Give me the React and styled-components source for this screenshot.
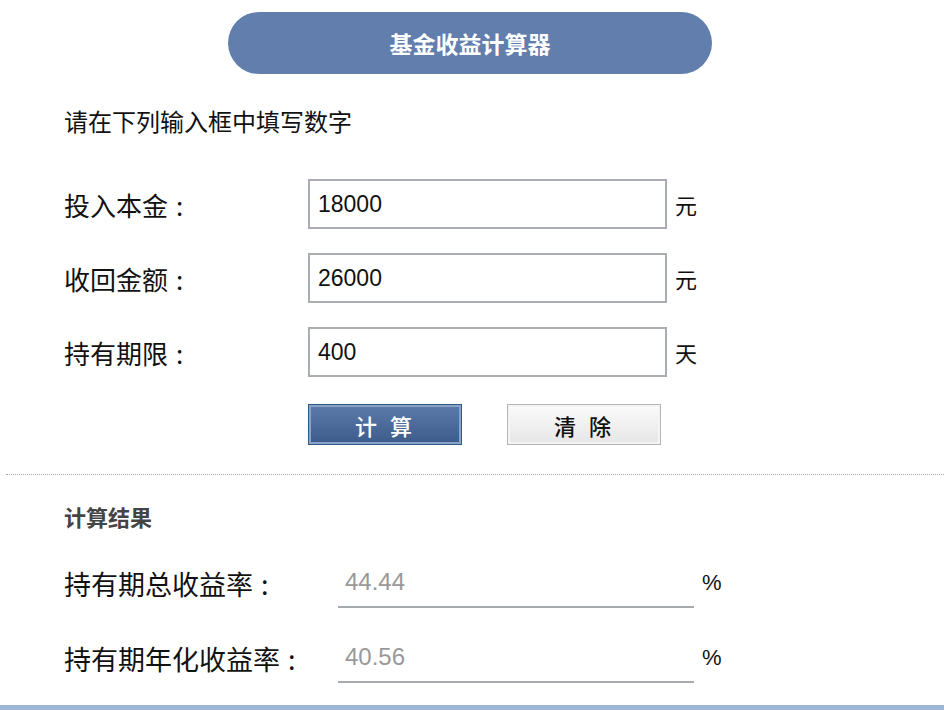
import React from "react";
import styled, { createGlobalStyle } from "styled-components";

const Global = createGlobalStyle`
  html, body { margin: 0; padding: 0; background: #fff; }
  body { font-family: "Liberation Sans", "Noto Sans CJK SC", sans-serif; color: #111; }
`;

const Page = styled.div`
  width: 944px;
  height: 710px;
  overflow: hidden;
  display: flex;
  flex-direction: column;
`;

const Header = styled.div`
  margin: 12px 0 0 228px;
  width: 484px;
  height: 62px;
  border-radius: 31px;
  background: #617ead;
  color: #fff;
  font-family: "Noto Sans CJK SC", sans-serif;
  font-weight: 700;
  font-size: 23px;
  display: flex;
  align-items: center;
  justify-content: center;
`;

const Intro = styled.div`
  margin: 33px 0 0 64px;
  font-family: "Noto Sans CJK SC", sans-serif;
  font-size: 24px;
  line-height: 28px;
  color: #111;
`;

const Form = styled.div`
  margin: 44px 0 0 64px;
  display: flex;
  flex-direction: column;
  gap: 24px;
`;

const Row = styled.div`
  display: flex;
  align-items: center;
  height: 50px;
`;

const Label = styled.div`
  width: ${(p) => p.$w}px;
  font-family: "Noto Sans CJK SC", sans-serif;
  font-size: ${(p) => p.$size || 26}px;
  color: #111;
  flex: none;
  white-space: nowrap;
`;

const Colon = styled.span`
  margin-left: 8px;
`;

const Input = styled.input`
  box-sizing: border-box;
  width: 359px;
  height: 50px;
  border: 2px solid #a9adb1;
  padding: 0 8px;
  font-family: "Liberation Sans", sans-serif;
  font-size: 23px;
  color: #111;
  outline: none;
  background: #fff;
`;

const Unit = styled.span`
  margin-left: 8px;
  font-family: "Noto Sans CJK SC", sans-serif;
  font-size: 22px;
  color: #111;
`;

const Buttons = styled.div`
  margin: 27px 0 0 308px;
  display: flex;
  gap: 45px;
`;

const Btn = styled.button`
  box-sizing: border-box;
  width: 154px;
  height: 41px;
  padding: 0;
  font-family: "Noto Sans CJK SC", sans-serif;
  font-size: 22px;
  font-weight: 500;
  letter-spacing: 13px;
  text-indent: 10px;
  cursor: pointer;
  border: 1px solid ${(p) => (p.$primary ? "#2d5a8a" : "#b5b5b5")};
  box-shadow: inset 0 0 0 2px ${(p) => (p.$primary ? "#8ba3c4" : "#f4f4f4")};
  background: ${(p) =>
    p.$primary
      ? "linear-gradient(#5c7bab, #3c5b8b)"
      : "linear-gradient(#fbfbfb, #e6e6e6)"};
  color: ${(p) => (p.$primary ? "#fff" : "#111")};
`;

const Divider = styled.div`
  margin: 29px 0 0 6px;
  border-top: 1px dotted #a8a8a8;
`;

const SectionTitle = styled.div`
  margin: 28px 0 0 64px;
  font-family: "Noto Sans CJK SC", sans-serif;
  font-weight: 700;
  font-size: 22px;
  line-height: 26px;
  color: #444;
`;

const Results = styled.div`
  margin: 29px 0 0 64px;
  display: flex;
  flex-direction: column;
  gap: 25px;
`;

const Output = styled.div`
  box-sizing: border-box;
  width: 356px;
  height: 50px;
  border-bottom: 2px solid #a6a9ad;
  padding: 0 7px;
  display: flex;
  align-items: center;
  font-family: "Liberation Sans", sans-serif;
  font-size: 24px;
  color: #999;
`;

const Percent = styled.span`
  margin-left: 8px;
  font-family: "Liberation Sans", sans-serif;
  font-size: 22px;
  color: #111;
  align-self: flex-start;
  margin-top: 12px;
`;

const BottomBar = styled.div`
  margin-top: auto;
  height: 5px;
  background: #9db6d6;
`;

const fields = [
  { label: "投入本金", value: "18000", unit: "元" },
  { label: "收回金额", value: "26000", unit: "元" },
  { label: "持有期限", value: "400", unit: "天" },
];

const results = [
  { label: "持有期总收益率", value: "44.44" },
  { label: "持有期年化收益率", value: "40.56" },
];

export default function App() {
  return (
    <Page>
      <Global />
      <Header>基金收益计算器</Header>
      <Intro>请在下列输入框中填写数字</Intro>
      <Form>
        {fields.map((f) => (
          <Row key={f.label}>
            <Label $w={244}>
              {f.label}
              <Colon>:</Colon>
            </Label>
            <Input defaultValue={f.value} />
            <Unit>{f.unit}</Unit>
          </Row>
        ))}
      </Form>
      <Buttons>
        <Btn $primary>计算</Btn>
        <Btn>清除</Btn>
      </Buttons>
      <Divider />
      <SectionTitle>计算结果</SectionTitle>
      <Results>
        {results.map((r) => (
          <Row key={r.label}>
            <Label $w={274} $size={27}>
              {r.label}
              <Colon>:</Colon>
            </Label>
            <Output>{r.value}</Output>
            <Percent>%</Percent>
          </Row>
        ))}
      </Results>
      <BottomBar />
    </Page>
  );
}
